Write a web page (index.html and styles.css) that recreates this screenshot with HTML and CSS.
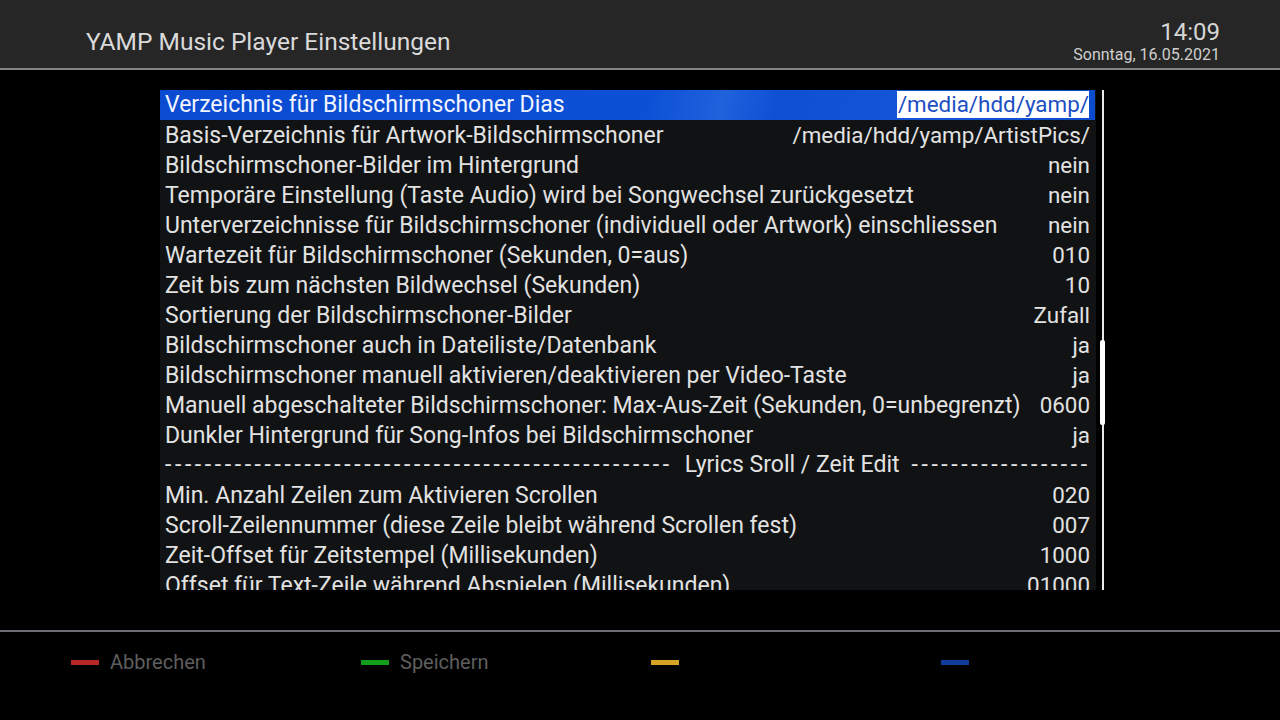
FILE: index.html
```html
<!DOCTYPE html>
<html lang="de">

<head>
  <meta charset="UTF-8">
  <meta name="viewport" content="width=device-width, initial-scale=1.0">
  <title>YAMP Music Player Einstellungen</title>
  <link rel="stylesheet" href="styles.css">
</head>

<body>
  <div class="screen">
    <div class="topbar">
      <div class="title">YAMP Music Player Einstellungen</div>
      <div class="clock">
        <div class="time">14:09</div>
        <div class="date">Sonntag, 16.05.2021</div>
      </div>
    </div>

    <div class="content">
      <div class="config-list">
        <div class="row selected">
          <span class="label">Verzeichnis für Bildschirmschoner Dias</span>
          <span class="value edit">/media/hdd/yamp/</span>
        </div>
        <div class="row">
          <span class="label">Basis-Verzeichnis für Artwork-Bildschirmschoner</span>
          <span class="value">/media/hdd/yamp/ArtistPics/</span>
        </div>
        <div class="row">
          <span class="label">Bildschirmschoner-Bilder im Hintergrund</span>
          <span class="value">nein</span>
        </div>
        <div class="row">
          <span class="label">Temporäre Einstellung (Taste Audio) wird bei Songwechsel zurückgesetzt</span>
          <span class="value">nein</span>
        </div>
        <div class="row">
          <span class="label">Unterverzeichnisse für Bildschirmschoner (individuell oder Artwork) einschliessen</span>
          <span class="value">nein</span>
        </div>
        <div class="row">
          <span class="label">Wartezeit für Bildschirmschoner (Sekunden, 0=aus)</span>
          <span class="value">010</span>
        </div>
        <div class="row">
          <span class="label">Zeit bis zum nächsten Bildwechsel (Sekunden)</span>
          <span class="value">10</span>
        </div>
        <div class="row">
          <span class="label">Sortierung der Bildschirmschoner-Bilder</span>
          <span class="value">Zufall</span>
        </div>
        <div class="row">
          <span class="label">Bildschirmschoner auch in Dateiliste/Datenbank</span>
          <span class="value">ja</span>
        </div>
        <div class="row">
          <span class="label">Bildschirmschoner manuell aktivieren/deaktivieren per Video-Taste</span>
          <span class="value">ja</span>
        </div>
        <div class="row">
          <span class="label">Manuell abgeschalteter Bildschirmschoner: Max-Aus-Zeit (Sekunden, 0=unbegrenzt)</span>
          <span class="value">0600</span>
        </div>
        <div class="row">
          <span class="label">Dunkler Hintergrund für Song-Infos bei Bildschirmschoner</span>
          <span class="value">ja</span>
        </div>
        <div class="row section">
          <span class="dashes">---------------------------------------------------</span>
          <span class="section-name">Lyrics Sroll / Zeit Edit</span>
          <span class="dashes">------------------</span>
        </div>
        <div class="row">
          <span class="label">Min. Anzahl Zeilen zum Aktivieren Scrollen</span>
          <span class="value">020</span>
        </div>
        <div class="row">
          <span class="label">Scroll-Zeilennummer (diese Zeile bleibt während Scrollen fest)</span>
          <span class="value">007</span>
        </div>
        <div class="row">
          <span class="label">Zeit-Offset für Zeitstempel (Millisekunden)</span>
          <span class="value">1000</span>
        </div>
        <div class="row">
          <span class="label">Offset für Text-Zeile während Abspielen (Millisekunden)</span>
          <span class="value">01000</span>
        </div>
      </div>
      <div class="scrollbar">
        <div class="thumb"></div>
      </div>
    </div>

    <div class="bottombar">
      <div class="key"><span class="key-bar red"></span><span class="key-text">Abbrechen</span></div>
      <div class="key"><span class="key-bar green"></span><span class="key-text">Speichern</span></div>
      <div class="key"><span class="key-bar yellow"></span><span class="key-text"></span></div>
      <div class="key"><span class="key-bar blue"></span><span class="key-text"></span></div>
    </div>
  </div>
</body>

</html>
```

FILE: styles.css
```css
body {
  margin: 0;
  background-color: #000;
  font-family: Roboto, "Liberation Sans", sans-serif;
  color: #e2e2e2;
}

.screen {
  width: 1280px;
  height: 720px;
  overflow: hidden;
  display: flex;
  flex-direction: column;
}

/* header */
.topbar {
  height: 68px;
  background-color: #262626;
  border-bottom: 2px solid #838383;
  display: flex;
  justify-content: space-between;
  align-items: flex-end;
  padding: 0 60px 0 86px;
}

.title {
  font-size: 24.5px;
  color: #dadada;
  padding-bottom: 12px;
}

.clock {
  text-align: right;
  padding-bottom: 3px;
}

.time {
  font-size: 24px;
  line-height: 26px;
  color: #d6d6d6;
}

.date {
  font-size: 16px;
  line-height: 20px;
  color: #cfcfcf;
}

/* list */
.content {
  display: flex;
  gap: 4px;
  margin: 20px 0 0 160px;
  height: 500px;
}

.config-list {
  width: 936px;
  height: 500px;
  overflow: hidden;
  background-color: #111214;
}

.row {
  display: flex;
  justify-content: space-between;
  align-items: baseline;
  height: 30px;
  padding: 0 6px 0 5px;
  font-size: 23px;
  line-height: 30px;
  white-space: nowrap;
}

.value {
  font-size: 22.4px;
}

.row.selected {
  margin-right: 1px;
  background: linear-gradient(100deg, #0a4bd2 0%, #0c50d6 52%, #1f62dc 60%, #0d50d4 66%, #1557d8 84%, #0b4ccf 100%);
  color: #f2f4ff;
}

.value.edit {
  background-color: #fff;
  color: #1c4fc2;
  line-height: 27px;
  padding-left: 1px;
}

.row.section {
  justify-content: flex-start;
}

.dashes {
  letter-spacing: 3.6px;
}

.section-name {
  margin: 0 12px 0 12px;
}

.scrollbar {
  position: relative;
  width: 5px;
  height: 500px;
  display: flex;
  justify-content: center;
}

.scrollbar::before {
  content: "";
  width: 2px;
  height: 100%;
  background-color: #e8e8e8;
}

.thumb {
  position: absolute;
  top: 250px;
  left: 0;
  width: 5px;
  height: 85px;
  border-radius: 2px;
  background-color: #fff;
}

/* footer */
.bottombar {
  margin-top: 40px;
  border-top: 2px solid #6c6c72;
  display: flex;
  padding: 17px 0 0 71px;
}

.key {
  width: 290px;
  display: flex;
  align-items: center;
  gap: 11px;
  height: 26px;
}

.key-bar {
  width: 28px;
  height: 5px;
}

.key-text {
  font-size: 20px;
  color: #5e5e5e;
}

.red {
  background-color: #b82626;
}

.green {
  background-color: #119e1b;
}

.yellow {
  background-color: #d6a226;
}

.blue {
  background-color: #0f3d9c;
}
```
